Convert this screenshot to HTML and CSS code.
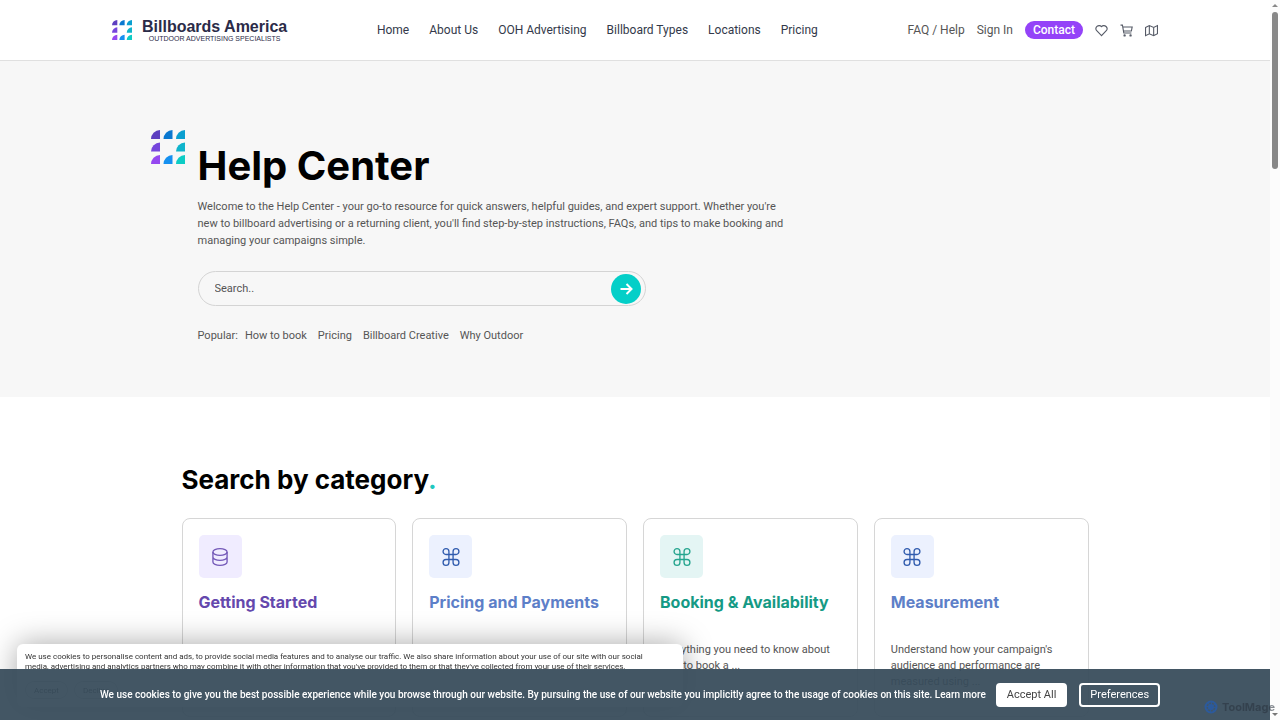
FILE: index.html
```
<!DOCTYPE html>
<html lang="en">
  <head>
    <meta charset="UTF-8" />
    <meta name="viewport" content="width=device-width, initial-scale=1" />
    <title>Help Center - Billboards America</title>
    <link rel="stylesheet" href="styles.css">
  </head>
  <body>
    <svg class="sprite" width="0" height="0" aria-hidden="true">
      <symbol id="mark" viewBox="0 0 34 34">
        <path fill="#5d3fc0" d="M0 9a9 9 0 0 1 9-9v9z" />
        <path fill="#0a78d0" d="M12.500 9a9 9 0 0 1 9-9v9z" />
        <path fill="#0a9fd0" d="M25 9a9 9 0 0 1 9-9v9z" />
        <path fill="#7646dc" d="M0 21.500a9 9 0 0 1 9-9v9z" />
        <path fill="#10b4cc" d="M25 21.500a9 9 0 0 1 9-9v9z" />
        <path fill="#9548f0" d="M0 34a9 9 0 0 1 9-9v9z" />
        <path fill="#1590f0" d="M12.500 34a9 9 0 0 1 9-9v9z" />
        <path fill="#0dccc5" d="M25 34a9 9 0 0 1 9-9v9z" />
      </symbol>
      <symbol id="command" viewBox="0 0 24 24">
        <path d="M18 2a3.500 3.500 0 0 0-3.500 3.500v13A3.500 3.500 0 1 0 18 15H6a3.500 3.500 0 1 0 3.500 3.500v-13A3.500 3.500 0 1 0 6 9h12a3.500 3.500 0 0 0 0-7z" />
      </symbol>
    </svg>

    <header class="header">
      <a class="logo" href="#">
        <svg class="logo-mark"><use href="#mark" /></svg>
        <span class="logo-text">
          <span class="logo-name">Billboards America</span>
          <span class="logo-tagline">OUTDOOR ADVERTISING SPECIALISTS</span>
        </span>
      </a>
      <nav class="nav">
        <a href="#">Home</a>
        <a href="#">About Us</a>
        <a href="#">OOH Advertising</a>
        <a href="#">Billboard Types</a>
        <a href="#">Locations</a>
        <a href="#">Pricing</a>
      </nav>
      <div class="actions">
        <a href="#">FAQ / Help</a>
        <a href="#">Sign In</a>
        <a class="contact" href="#">Contact</a>
        <a class="icon" href="#" aria-label="Favorites">
          <svg viewBox="0 0 24 24"><path d="M12 21.500 3.600 12.900a5.900 5.900 0 0 1 0-8.300 5.800 5.800 0 0 1 8.400.3 5.800 5.800 0 0 1 8.400-.3 5.900 5.900 0 0 1 0 8.300z" /></svg>
        </a>
        <a class="icon" href="#" aria-label="Cart">
          <svg viewBox="0 0 24 24"><path d="M1 2h3.500L7 16.500h14M5 5.500h17.500l-1.500 7.500H6.300" /><circle cx="8.500" cy="21" r="1.200" /><circle cx="19.500" cy="21" r="1.200" /></svg>
        </a>
        <a class="icon" href="#" aria-label="Map">
          <svg viewBox="0 0 24 24"><path d="M1 6.500 8 3l8 3.500L23 3v15l-7 3.500L8 18l-7 3.500zM8 3v15M16 6.500v15" /></svg>
        </a>
      </div>
    </header>

    <main>
      <section class="hero">
        <div class="hero-inner">
          <svg class="hero-mark"><use href="#mark" /></svg>
          <h1>Help Center</h1>
          <p class="intro">
            Welcome to the Help Center - your go-to resource for quick answers, helpful guides, and expert support. Whether you're<br>
            new to billboard advertising or a returning client, you'll find step-by-step instructions, FAQs, and tips to make booking and<br>
            managing your campaigns simple.
          </p>
          <form class="search">
            <input type="text" name="q" placeholder="Search.." aria-label="Search" />
            <button type="submit" aria-label="Search">
              <svg viewBox="0 0 14 14"><path d="M1.500 7h11M7.500 2l5 5-5 5" /></svg>
            </button>
          </form>
          <div class="popular">
            <span>Popular:</span>
            <a href="#">How to book</a>
            <a href="#">Pricing</a>
            <a href="#">Billboard Creative</a>
            <a href="#">Why Outdoor</a>
          </div>
        </div>
      </section>

      <section class="categories">
        <h2>Search by category<span class="dot">.</span></h2>
        <div class="cards">
          <a class="card purple" href="#">
            <span class="card-icon">
              <svg viewBox="0 0 24 24"><ellipse cx="12" cy="6" rx="8.500" ry="4" /><path d="M3.500 6v12c0 2.200 3.800 4 8.500 4s8.500-1.800 8.500-4V6M3.500 12c0 2.200 3.800 4 8.500 4s8.500-1.800 8.500-4" /></svg>
            </span>
            <h3>Getting Started</h3>
          </a>
          <a class="card blue" href="#">
            <span class="card-icon"><svg><use href="#command" /></svg></span>
            <h3>Pricing and Payments</h3>
          </a>
          <a class="card green" href="#">
            <span class="card-icon"><svg><use href="#command" /></svg></span>
            <h3>Booking &amp; Availability</h3>
            <p>Everything you need to know about how to book a ...</p>
          </a>
          <a class="card blue" href="#">
            <span class="card-icon"><svg><use href="#command" /></svg></span>
            <h3>Measurement</h3>
            <p>Understand how your campaign's audience and performance are measured using ...</p>
          </a>
        </div>
      </section>
    </main>

    <div class="consent">
      <p>
        We use cookies to personalise content and ads, to provide social media features and to analyse our traffic. We also share information about your use of our site with our social<br>
        media, advertising and analytics partners who may combine it with other information that you've provided to them or that they've collected from your use of their services.
      </p>
      <div class="consent-buttons">
        <button type="button">Accept</button>
        <button type="button">Decline</button>
      </div>
    </div>

    <div class="cookie-bar">
      <p>We use cookies to give you the best possible experience while you browse through our website. By pursuing the use of our website you implicitly agree to the usage of cookies on this site. <a href="#">Learn more</a></p>
      <button class="accept" type="button">Accept All</button>
      <button class="preferences" type="button">Preferences</button>
    </div>

    <div class="scrollbar">
      <span class="arrow-up"></span>
      <span class="thumb"></span>
      <span class="arrow-down"></span>
    </div>

    <div class="watermark">
      <svg viewBox="0 0 16 16"><circle cx="8" cy="8" r="5.500" /><circle class="core" cx="8" cy="8" r="2" /><path d="M8 6 9 2M10 8l4 1M8 10l-1 4M6 8 2 7M9.400 6.600 13 5M9.400 9.400 11 13M6.600 9.400 3 11M6.600 6.600 5 3" /></svg>
      <span>ToolMage</span>
    </div>
  </body>
</html>
```
FILE: styles.css
```
* {
  box-sizing: border-box;
}
body {
  margin: 0;
  padding-right: 10px;
  font-family: Roboto, "Liberation Sans", sans-serif;
  font-size: 11px;
  color: #555;
  background: #fff;
}
a {
  color: inherit;
  text-decoration: none;
}
h1,
h2,
h3,
p {
  margin: 0;
}
h1,
h2,
h3 {
  font-family: Inter, "Liberation Sans", sans-serif;
}
button {
  font-family: inherit;
  cursor: pointer;
}
svg {
  fill: none;
  stroke: currentColor;
  stroke-width: 2;
}
.sprite {
  position: absolute;
}

/* header */
.header {
  display: flex;
  align-items: center;
  justify-content: space-between;
  height: 61px;
  padding: 0 112px;
  border-bottom: 1px solid #e0e0e0;
}
.logo {
  display: flex;
  align-items: center;
  gap: 10px;
  color: #2b2b48;
  font-family: "Liberation Sans", Arial, sans-serif;
}
.logo-mark {
  width: 20px;
  height: 20px;
  stroke: none;
}
.logo-text {
  display: flex;
  flex-direction: column;
  align-items: center;
}
.logo-name {
  font-size: 16px;
  font-weight: bold;
  line-height: 16px;
}
.logo-tagline {
  font-size: 7px;
  line-height: 7px;
}
.nav {
  display: flex;
  gap: 20px;
  font-size: 12px;
  color: #33394a;
}
.actions {
  display: flex;
  align-items: center;
  gap: 12px;
  font-size: 12px;
}
.contact {
  padding: 0 8px;
  border-radius: 9px;
  line-height: 18px;
  background: #9443f8;
  color: #fff;
  font-weight: 500;
}
.icon {
  display: flex;
  color: #555a66;
}
.icon svg {
  width: 13px;
  height: 13px;
}

/* hero */
.hero {
  height: 336px;
  padding-top: 80px;
  background: #f7f7f7;
}
.hero-inner {
  position: relative;
  max-width: 907px;
  margin: 0 auto;
  padding: 0 16px;
}
.hero-mark {
  position: absolute;
  top: -11px;
  left: -31px;
  width: 34px;
  height: 34px;
  stroke: none;
}
h1 {
  font-size: 40px;
  line-height: 50px;
  color: #000;
}
.intro {
  margin-top: 7px;
  line-height: 17px;
  white-space: nowrap;
}
.search {
  display: flex;
  align-items: center;
  width: 448px;
  height: 35px;
  margin-top: 22px;
  padding: 0 4px 0 16px;
  border: 1px solid #d4d4d4;
  border-radius: 18px;
}
.search input {
  flex: 1;
  padding: 0;
  border: 0;
  outline: 0;
  background: none;
  font: inherit;
}
.search input::placeholder {
  color: #555;
}
.search button {
  display: flex;
  align-items: center;
  justify-content: center;
  width: 30px;
  height: 30px;
  padding: 0;
  border: 0;
  border-radius: 50%;
  background: #04cfc8;
  color: #fff;
}
.search button svg {
  width: 14px;
  height: 14px;
}
.popular {
  display: flex;
  gap: 11px;
  margin-top: 22px;
  line-height: 16px;
}
.popular span {
  margin-right: -4px;
}

/* categories */
.categories {
  max-width: 907px;
  margin: 0 auto;
  padding-top: 65px;
}
h2 {
  font-size: 26px;
  line-height: 36px;
  color: #000;
}
.dot {
  color: #1fc8bf;
}
.cards {
  display: grid;
  grid-template-columns: repeat(4, 1fr);
  gap: 16px;
  margin-top: 20px;
}
.card {
  min-height: 199px;
  padding: 16px;
  border: 1px solid #d6d6d6;
  border-radius: 8px;
}
.card-icon {
  display: flex;
  align-items: center;
  justify-content: center;
  width: 43px;
  height: 43px;
  border-radius: 5px;
}
.card-icon svg {
  width: 20px;
  height: 20px;
  stroke-width: 1.600;
}
.card h3 {
  margin-top: 13px;
  font-size: 16px;
  line-height: 22px;
  white-space: nowrap;
}
.card p {
  margin-top: 29px;
  line-height: 16px;
}
.purple .card-icon {
  background: #f0ecff;
  color: #7358b8;
}
.purple h3 {
  color: #6448ad;
}
.blue .card-icon {
  background: #ecf1fe;
  color: #315cae;
}
.blue h3 {
  color: #5d7fc8;
}
.green .card-icon {
  background: #e4f5f4;
  color: #26a58f;
}
.green h3 {
  color: #159a85;
}

/* cookie notices */
.consent {
  position: fixed;
  left: 17px;
  bottom: 13px;
  width: 666px;
  padding: 8px;
  border-radius: 6px;
  background: #fff;
  box-shadow: 0 0 30px rgba(0, 0, 0, 0.35);
  font-size: 8px;
  line-height: 10px;
  color: #333;
  white-space: nowrap;
}
.consent-buttons {
  display: flex;
  gap: 6px;
  margin-top: 9px;
}
.consent button {
  height: 18px;
  padding: 0 8px;
  border: 1px solid #ccc;
  border-radius: 9px;
  background: #fff;
  color: #333;
  font-size: 8px;
}
.cookie-bar {
  position: fixed;
  left: 0;
  right: 10px;
  bottom: 0;
  display: flex;
  align-items: center;
  justify-content: center;
  height: 51px;
  padding-right: 10px;
  background: rgba(55, 75, 90, 0.94);
  color: #fff;
  white-space: nowrap;
}
.cookie-bar p {
  font-size: 10px;
  font-weight: 500;
}
.cookie-bar button {
  height: 24px;
  padding: 0 9px;
  border: 2px solid #fff;
  border-radius: 4px;
  font-size: 11px;
}
.accept {
  margin-left: 10px;
  background: #fff;
  color: #444;
}
.preferences {
  margin-left: 12px;
  background: none;
  color: #fff;
}

/* scrollbar and watermark */
.scrollbar {
  position: fixed;
  top: 0;
  right: 0;
  bottom: 0;
  display: flex;
  flex-direction: column;
  align-items: center;
  width: 10px;
  padding: 4px 0;
  background: #fcfcfc;
}
.arrow-up,
.arrow-down {
  border: 3px solid transparent;
}
.arrow-up {
  border-top: 0;
  border-bottom-color: #888;
}
.arrow-down {
  margin-top: auto;
  border-bottom: 0;
  border-top-color: #777;
}
.thumb {
  width: 6px;
  height: 157px;
  margin-top: 5px;
  border-radius: 3px;
  background: #888;
}
.watermark {
  position: fixed;
  right: 5px;
  bottom: 5px;
  display: flex;
  align-items: center;
  gap: 3px;
  font-family: Inter, "Liberation Sans", sans-serif;
  font-size: 11px;
  font-weight: bold;
  line-height: 16px;
  color: rgba(40, 50, 60, 0.55);
}
.watermark svg {
  width: 16px;
  height: 16px;
  stroke: #2c5a9c;
}
.watermark path {
  stroke-width: 1;
}
.watermark .core {
  fill: #2c5a9c;
}
```
